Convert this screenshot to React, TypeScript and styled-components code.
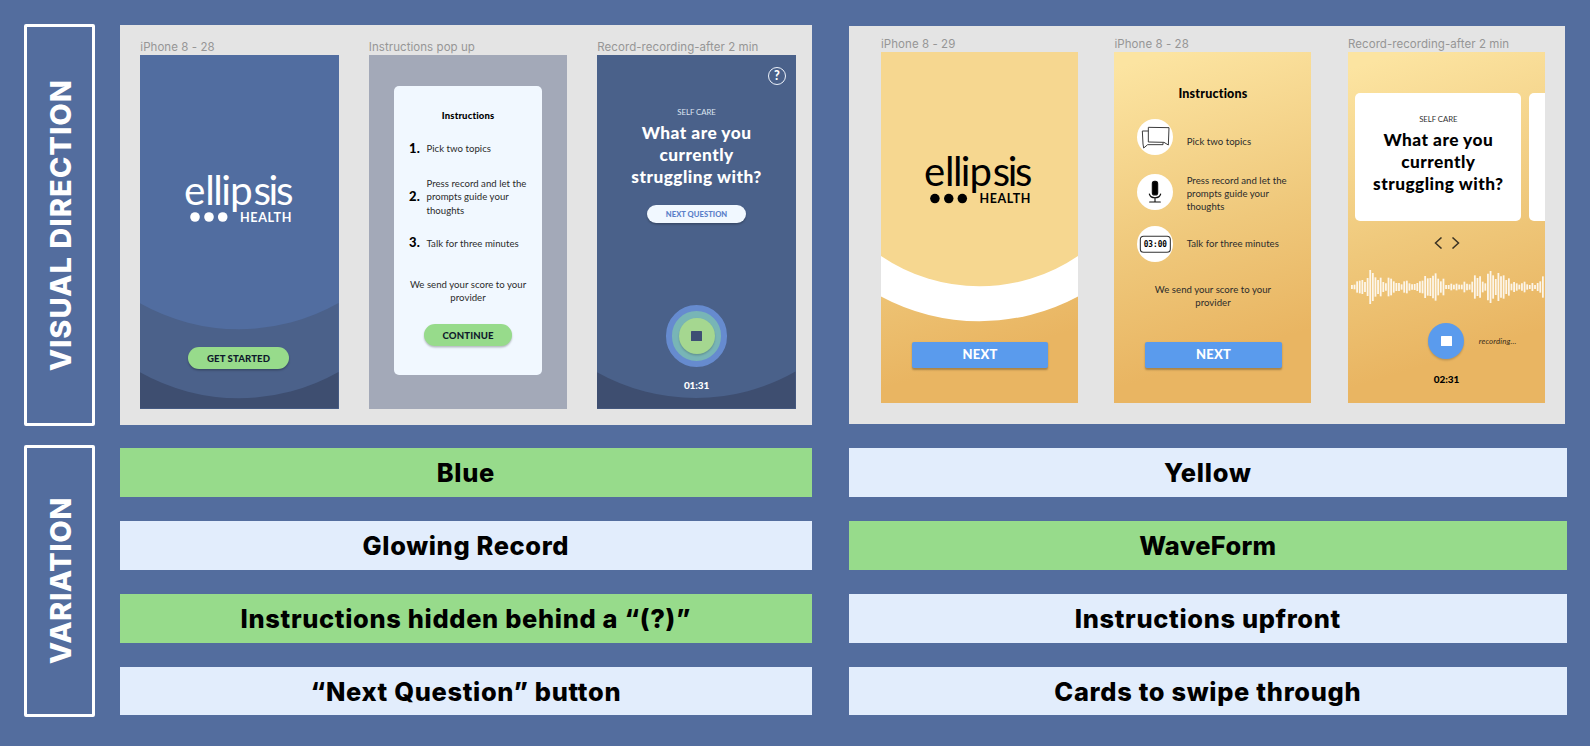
import React from 'react';
import styled, { createGlobalStyle, css } from 'styled-components';

const GlobalStyle = createGlobalStyle`
  *, *::before, *::after { box-sizing: border-box; }
  html, body { margin: 0; padding: 0; }
  body { background: #536d9e; overflow: hidden; font-variant-ligatures: none; }
`;

const bodyFont = `Lato, "Liberation Sans", sans-serif`;
const headFont = `Inter, "Liberation Sans", sans-serif`;

const Page = styled.main`
  display: grid;
  grid-template-columns: 71px 691.7px 730.3px;
  grid-template-rows: 401.5px 272px;
  column-gap: 25px;
  row-gap: 19.5px;
  width: 1590px;
  height: 746px;
  padding: 24px 0 0 24px;
  background: #536d9e;
  font-family: ${bodyFont};
`;

const SideLabel = styled.div`
  display: flex;
  align-items: center;
  justify-content: center;
  border: 3px solid #fff;
  border-radius: 2px;
`;

const SideText = styled.span<{ $spacing: number }>`
  writing-mode: vertical-rl;
  transform: rotate(180deg);
  margin-left: 2px;
  font: 800 29px/36px ${headFont};
  letter-spacing: ${(p) => p.$spacing}px;
  color: #fff;
  white-space: nowrap;
`;

const Panel = styled.section<{ $side: 'left' | 'right' }>`
  display: flex;
  align-items: flex-start;
  background: #e4e4e4;
  ${(p) =>
    p.$side === 'left'
      ? css`
          height: 399.7px;
          margin-top: 1.3px;
          padding: 15px 0 0 20.3px;
          gap: 30px;
        `
      : css`
          height: 397.7px;
          width: 716px;
          margin: 2.3px 0 0 12.3px;
          padding: 11px 0 0 32px;
          gap: 36.5px;
        `}
`;

const FrameBox = styled.figure<{ $w: number }>`
  width: ${(p) => p.$w}px;
  margin: 0;
`;

const FrameName = styled.figcaption`
  height: 15px;
  font: 400 11.5px/14.6px ${headFont};
  letter-spacing: 0.06px;
  color: #969696;
  white-space: nowrap;
`;

const gold = 'linear-gradient(163deg, #fce4a1 4%, #efc87b 50%, #e9b562 82%)';

const Phone = styled.div<{ $h: number; $bg: string; $pt?: number }>`
  position: relative;
  isolation: isolate;
  display: flex;
  flex-direction: column;
  align-items: center;
  height: ${(p) => p.$h}px;
  padding-top: ${(p) => p.$pt ?? 0}px;
  background: ${(p) => p.$bg};
  overflow: hidden;
`;

const Backdrop = styled.svg`
  position: absolute;
  inset: 0;
  width: 100%;
  height: 100%;
  z-index: -1;
`;

const Pill = styled.button<{ $w: number; $mt: number; $mr?: number }>`
  flex: none;
  width: ${(p) => p.$w}px;
  height: 21.6px;
  margin: ${(p) => p.$mt}px ${(p) => p.$mr ?? 0}px 0 0;
  padding: 0;
  border: 0;
  border-radius: 11px;
  background: #97db8b;
  box-shadow: 0 1.5px 2px rgba(0, 0, 0, 0.25);
  color: #0f1a2c;
  font: 900 9.6px/21px ${bodyFont};
  letter-spacing: 0.1px;
  text-align: center;
`;

const QuestionPill = styled(Pill)`
  height: 17.7px;
  background: #f1f8ff;
  color: #5b80c9;
  font: 900 7.6px/18.4px ${bodyFont};
  letter-spacing: 0.05px;
`;

const NextButton = styled.button<{ $mt: number }>`
  flex: none;
  width: 136.5px;
  height: 26px;
  margin: ${(p) => p.$mt}px 0 0 1px;
  padding: 0;
  border: 0;
  border-radius: 2px;
  background: #5a9bed;
  box-shadow: 0 1.5px 2px rgba(0, 0, 0, 0.28);
  color: #fff;
  font: 900 13px/25px ${bodyFont};
  letter-spacing: 0.2px;
`;

const Popup = styled.div`
  display: flex;
  flex-direction: column;
  align-items: center;
  width: 148.3px;
  height: 288.6px;
  padding-top: 23px;
  border-radius: 5px;
  background: #f1f8ff;
`;

const Title = styled.h3<{ $size: number; $lh: number; $ls: number }>`
  margin: 0;
  font: 900 ${(p) => p.$size}px/${(p) => p.$lh}px ${bodyFont};
  letter-spacing: ${(p) => p.$ls}px;
  color: #000;
`;

const Step = styled.div<{ $mt: number }>`
  display: grid;
  grid-template-columns: 17.6px 1fr;
  align-items: center;
  align-self: stretch;
  margin: ${(p) => p.$mt}px 0 0 15px;
`;

const StepNumber = styled.b`
  padding-bottom: 1px;
  font: 900 13px/11px ${bodyFont};
  letter-spacing: 0.3px;
  color: #000;
`;

const Copy = styled.p<{ $pt?: number }>`
  margin: 0;
  padding-top: ${(p) => p.$pt ?? 0}px;
  font: 400 9.6px/13.3px ${bodyFont};
  letter-spacing: 0.03px;
  color: #2b2b2b;
  white-space: pre-line;
`;

const Note = styled(Copy)<{ $mt: number }>`
  margin-top: ${(p) => p.$mt}px;
  text-align: center;
`;

const IconStep = styled.div<{ $mt: number }>`
  display: flex;
  align-items: center;
  align-self: stretch;
  gap: 13.2px;
  margin: ${(p) => p.$mt}px 0 0 23px;
`;

const IconDisc = styled.svg`
  flex: none;
  width: 36px;
  height: 36px;
  border-radius: 50%;
  background: #fff;
`;

const HelpRow = styled.div`
  display: flex;
  justify-content: flex-end;
  align-self: stretch;
  padding-right: 10px;
`;

const Help = styled.span`
  width: 18px;
  height: 18px;
  border: 1.4px solid #eef3fb;
  border-radius: 50%;
  color: #fff;
  font: 900 12.5px/15.8px ${bodyFont};
  text-align: center;
`;

const Topic = styled.div<{ $mt: number; $color: string }>`
  margin-top: ${(p) => p.$mt}px;
  font: 400 7.8px/10.6px ${bodyFont};
  letter-spacing: -0.05px;
  color: ${(p) => p.$color};
`;

const Question = styled.h2<{ $color: string }>`
  margin: 4.4px 0 0;
  font: 900 17.3px/22.1px ${bodyFont};
  letter-spacing: 0.48px;
  text-align: center;
  white-space: pre-line;
  color: ${(p) => p.$color};
`;

const GlowRecord = styled.div`
  display: grid;
  place-items: center;
  flex: none;
  width: 61.4px;
  height: 61.4px;
  margin-top: 82.4px;
  border: 6px solid #668bcf;
  border-radius: 50%;
  background: #78b5b6;
`;

const StopDisc = styled.div<{ $disc: string; $stop: string }>`
  display: grid;
  place-items: center;
  width: 36px;
  height: 36px;
  border-radius: 50%;
  background: ${(p) => p.$disc};
  box-shadow: 0 1.5px 2px rgba(0, 0, 0, 0.18);
  &::after {
    content: '';
    width: 10.4px;
    height: 10.4px;
    border-radius: 0.6px;
    background: ${(p) => p.$stop};
  }
`;

const Clock = styled.div<{ $mt: number; $color: string }>`
  margin-top: ${(p) => p.$mt}px;
  font: 900 10px/12px ${bodyFont};
  letter-spacing: -0.1px;
  color: ${(p) => p.$color};
`;

const Deck = styled.div`
  display: flex;
  flex: none;
  gap: 8px;
  align-self: stretch;
  padding-left: 7.2px;
  overflow: hidden;
`;

const Card = styled.article`
  display: flex;
  flex: none;
  flex-direction: column;
  align-items: center;
  width: 166.3px;
  height: 127.7px;
  border-radius: 5px;
  background: #fff;
`;

const Arrows = styled.svg`
  flex: none;
  width: 26px;
  height: 12px;
  margin: 16.3px 0 0 1px;
`;

const Wave = styled.svg`
  flex: none;
  width: 197px;
  height: 36px;
  margin-top: 20px;
`;

const RecordRow = styled.div`
  display: grid;
  grid-template-columns: 1fr auto 1fr;
  align-items: center;
  align-self: stretch;
  margin-top: 18px;
`;

const Status = styled.em`
  grid-column: 3;
  padding-left: 14.3px;
  font: italic 400 7.9px/10px ${bodyFont};
  letter-spacing: 0.15px;
  color: #3a2e1a;
`;

const Middle = styled.div`
  grid-column: 2;
`;

const Bars = styled.div<{ $side: 'left' | 'right' }>`
  display: flex;
  flex-direction: column;
  gap: 24px;
  padding-top: 3.2px;
  margin-left: ${(p) => (p.$side === 'right' ? 12 : 0)}px;
`;

const Bar = styled.div<{ $picked?: boolean; $ls: number }>`
  height: 48.8px;
  background: ${(p) => (p.$picked ? '#97db8b' : '#e2edfc')};
  color: #000;
  font: 800 25.4px/50.4px ${headFont};
  letter-spacing: ${(p) => p.$ls}px;
  text-align: center;
  white-space: nowrap;
`;

const LogoSvg = styled.svg`
  flex: none;
  overflow: visible;
`;

const Logo = ({ color, scale = 1 }: { color: string; scale?: number }) => (
  <LogoSvg width={110 * scale} height={50 * scale} viewBox="0 0 110 50" fill={color}>
    <text
      x="-1 20.2 28.2 36.2 44.9 68.4 83.6 90.9"
      y="32.7"
      fontFamily="Lato, sans-serif"
      fontSize="40.5"
      fontWeight="400"
    >
      ellipsis
    </text>
    <circle cx="10" cy="45" r="4.8" />
    <circle cx="24" cy="45" r="4.8" />
    <circle cx="37.7" cy="45" r="4.8" />
    <text
      x="55"
      y="49.6"
      fontFamily="Lato, sans-serif"
      fontSize="12.6"
      fontWeight="700"
      textLength="51.4"
    >
      HEALTH
    </text>
  </LogoSvg>
);

const ChatIcon = () => (
  <IconDisc viewBox="0 0 108 108" fill="none" stroke="#3c3c3c" strokeWidth="3" strokeLinejoin="round">
    <path d="M34 25 L96 26 L94 78 L81 70 L34 69 Z" />
    <path d="M34 36 H16 L18 75 L20 87 L32 77 H78 V71" />
  </IconDisc>
);

const MicIcon = () => (
  <IconDisc viewBox="0 0 108 108" fill="none" stroke="#111" strokeWidth="3.4" strokeLinecap="round">
    <rect x="46" y="22" width="16" height="41" rx="7" fill="#000" />
    <path d="M37 60 C41 75 67 75 71 60" />
    <path d="M54 72 V84 M38 84 H70" />
  </IconDisc>
);

const TimerIcon = () => (
  <IconDisc viewBox="0 0 108 108">
    <rect x="10" y="31" width="90" height="48" rx="10" fill="none" stroke="#333" strokeWidth="3.2" />
    <text
      x="20"
      y="64"
      fontFamily="'DejaVu Sans Mono', monospace"
      fontSize="25"
      fontWeight="700"
      textLength="70"
      lengthAdjust="spacingAndGlyphs"
    >
      03:00
    </text>
  </IconDisc>
);

const amplitudes = [
  12, 14, 34, 38, 42, 30, 54, 102, 84, 58, 42, 56, 30, 22, 56, 50, 34, 24, 24, 16, 34, 38, 22, 16, 18, 24, 34,
  38, 66, 52, 54, 68, 82, 50, 34, 50, 12, 12, 20, 14, 20, 14, 14, 32, 20, 16, 32, 70, 54, 64, 32, 22, 80, 96,
  70, 48, 84, 64, 70, 42, 52, 20, 30, 22, 14, 22, 32, 16, 12, 24, 12, 24, 34, 64,
];

const Waveform = () => (
  <Wave viewBox="0 0 197 36" stroke="#fff" strokeOpacity="0.85" strokeWidth="1.8">
    {amplitudes.map((a, i) => {
      const x = 3.9 + i * 2.616;
      return <path key={i} d={`M${x.toFixed(2)} ${18 - a / 6} v${(a / 3).toFixed(2)}`} />;
    })}
  </Wave>
);

const Frame = ({ name, w, children }: { name: string; w: number; children: React.ReactNode }) => (
  <FrameBox $w={w}>
    <FrameName>{name}</FrameName>
    {children}
  </FrameBox>
);

const QUESTION = 'What are you\ncurrently\nstruggling with?';
const PRESS = 'Press record and let the\nprompts guide your\nthoughts';
const SCORE = 'We send your score to your\nprovider';

const BluePanel = () => (
  <Panel $side="left">
    <Frame name="iPhone 8 - 28" w={198.5}>
      <Phone $h={353.6} $bg="#516da0" $pt={116.7}>
        <Backdrop viewBox="0 0 198.5 353.6" preserveAspectRatio="none">
          <path d="M0 248.3 A202 202 0 0 0 198.5 248 V353.6 H0 Z" fill="#4b618a" />
          <path d="M0 317.3 A202 202 0 0 0 198.5 317 V353.6 H0 Z" fill="#3e4e70" />
        </Backdrop>
        <Logo color="#fff" />
        <Pill $w={101} $mt={125.3} $mr={2}>GET STARTED</Pill>
      </Phone>
    </Frame>
    <Frame name="Instructions pop up" w={198.5}>
      <Phone $h={353.6} $bg="#a3a9b8" $pt={30.7}>
        <Popup>
          <Title $size={9.5} $lh={14.6} $ls={0.15}>Instructions</Title>
          <Step $mt={18.4}>
            <StepNumber>1.</StepNumber>
            <Copy>Pick two topics</Copy>
          </Step>
          <Step $mt={21.8}>
            <StepNumber>2.</StepNumber>
            <Copy>{PRESS}</Copy>
          </Step>
          <Step $mt={19.9}>
            <StepNumber>3.</StepNumber>
            <Copy>Talk for three minutes</Copy>
          </Step>
          <Note $mt={27.7}>{SCORE}</Note>
          <Pill $w={88.4} $mt={19.9}>CONTINUE</Pill>
        </Popup>
      </Phone>
    </Frame>
    <Frame name="Record-recording-after 2 min" w={198.5}>
      <Phone $h={353.6} $bg="#4a618a" $pt={11.7}>
        <Backdrop viewBox="0 0 198.5 353.6" preserveAspectRatio="none">
          <path d="M0 317.3 A202 202 0 0 0 198.5 316.6 V353.6 H0 Z" fill="#3e4e70" />
        </Backdrop>
        <HelpRow>
          <Help>?</Help>
        </HelpRow>
        <Topic $mt={22} $color="#dfe6f2">SELF CARE</Topic>
        <Question $color="#fff">{QUESTION}</Question>
        <QuestionPill $w={99} $mt={16.8}>NEXT QUESTION</QuestionPill>
        <GlowRecord>
          <StopDisc $disc="#a5d790" $stop="#3e4e74" />
        </GlowRecord>
        <Clock $mt={12.2} $color="#fff">01:31</Clock>
      </Phone>
    </Frame>
  </Panel>
);

const YellowPanel = () => (
  <Panel $side="right">
    <Frame name="iPhone 8 - 29" w={197}>
      <Phone $h={350.5} $bg={gold} $pt={101.8}>
        <Backdrop viewBox="0 0 197 350.5" preserveAspectRatio="none">
          <path d="M0 0 H197 V244.4 A208 208 0 0 1 0 244.4 Z" fill="#fff" />
          <path d="M0 0 H197 V204 A175 175 0 0 1 0 204 Z" fill="#f6d790" />
        </Backdrop>
        <Logo color="#000" scale={0.99} />
        <NextButton $mt={138.4}>NEXT</NextButton>
      </Phone>
    </Frame>
    <Frame name="iPhone 8 - 28" w={197}>
      <Phone $h={350.5} $bg={gold} $pt={33.9}>
        <Title $size={12.5} $lh={16} $ls={0.2}>Instructions</Title>
        <IconStep $mt={16.8}>
          <ChatIcon />
          <Copy $pt={9.8}>Pick two topics</Copy>
        </IconStep>
        <IconStep $mt={15.2}>
          <MicIcon />
          <Copy $pt={3.6}>{PRESS}</Copy>
        </IconStep>
        <IconStep $mt={12.2}>
          <TimerIcon />
          <Copy>Talk for three minutes</Copy>
        </IconStep>
        <Note $mt={20.8}>{SCORE}</Note>
        <NextButton $mt={32.6}>NEXT</NextButton>
      </Phone>
    </Frame>
    <Frame name="Record-recording-after 2 min" w={197}>
      <Phone $h={350.5} $bg={gold} $pt={40.7}>
        <Deck>
          <Card>
            <Topic $mt={21} $color="#333">SELF CARE</Topic>
            <Question $color="#000">{QUESTION}</Question>
          </Card>
          <Card />
        </Deck>
        <Arrows viewBox="0 0 26 12" fill="none" stroke="#3b3324" strokeWidth="1.5">
          <path d="M7.5 0.5 L1.5 6 L7.5 11.5" />
          <path d="M18.5 0.5 L24.5 6 L18.5 11.5" />
        </Arrows>
        <Waveform />
        <RecordRow>
          <Middle>
            <StopDisc $disc="#5a9bed" $stop="#fff" />
          </Middle>
          <Status>recording...</Status>
        </RecordRow>
        <Clock $mt={13.8} $color="#000">02:31</Clock>
      </Phone>
    </Frame>
  </Panel>
);

const App = () => (
  <>
    <GlobalStyle />
    <Page>
      <SideLabel>
        <SideText $spacing={1.05}>VISUAL DIRECTION</SideText>
      </SideLabel>
      <BluePanel />
      <YellowPanel />
      <SideLabel>
        <SideText $spacing={0.6}>VARIATION</SideText>
      </SideLabel>
      <Bars $side="left">
        <Bar $picked $ls={0.7}>Blue</Bar>
        <Bar $ls={0.65}>Glowing Record</Bar>
        <Bar $picked $ls={0.68}>Instructions hidden behind a “(?)”</Bar>
        <Bar $ls={0.68}>“Next Question” button</Bar>
      </Bars>
      <Bars $side="right">
        <Bar $ls={0.75}>Yellow</Bar>
        <Bar $picked $ls={0.35}>WaveForm</Bar>
        <Bar $ls={0.68}>Instructions upfront</Bar>
        <Bar $ls={0.7}>Cards to swipe through</Bar>
      </Bars>
    </Page>
  </>
);

export default App;
